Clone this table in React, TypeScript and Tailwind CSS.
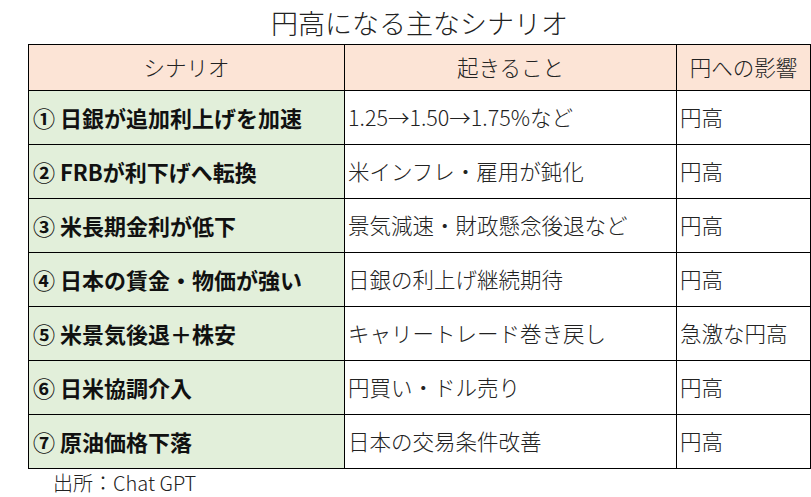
import React from "react";

const rows: [string, string, string][] = [
  ["① 日銀が追加利上げを加速", "1.25→1.50→1.75%など", "円高"],
  ["② FRBが利下げへ転換", "米インフレ・雇用が鈍化", "円高"],
  ["③ 米長期金利が低下", "景気減速・財政懸念後退など", "円高"],
  ["④ 日本の賃金・物価が強い", "日銀の利上げ継続期待", "円高"],
  ["⑤ 米景気後退＋株安", "キャリートレード巻き戻し", "急激な円高"],
  ["⑥ 日米協調介入", "円買い・ドル売り", "円高"],
  ["⑦ 原油価格下落", "日本の交易条件改善", "円高"],
];

export default function App() {
  return (
    <div
      className="w-[811px] h-[497px] bg-white overflow-hidden text-[#1a1a1a]"
      style={{ fontFamily: '"Noto Sans CJK JP", "Noto Sans", sans-serif' }}
    >
      <div className="pl-[28px]">
        <div className="w-[783px] h-[44px] flex items-center justify-center text-[27px] leading-none font-light text-[#222]">
          円高になる主なシナリオ
        </div>
        <div className="w-[783px] grid grid-cols-[316px_332px_134px] border-l border-t border-black">
          <div className="h-[46px] bg-[#fce4d6] border-r border-b border-black flex items-center justify-center text-[21.5px] font-light text-[#222]">
            シナリオ
          </div>
          <div className="h-[46px] bg-[#fce4d6] border-r border-b border-black flex items-center justify-center text-[21.5px] font-light text-[#222]">
            起きること
          </div>
          <div className="h-[46px] bg-[#fce4d6] border-r border-b border-black flex items-center justify-center text-[21.5px] font-light text-[#222]">
            円への影響
          </div>
          {rows.map((r, i) => (
            <React.Fragment key={i}>
              <div className="h-[54px] bg-[#e2efda] border-r border-b border-black flex items-center pl-[4px] text-[22px] font-bold text-[#111] whitespace-nowrap">
                {r[0]}
              </div>
              <div className="h-[54px] bg-white border-r border-b border-black flex items-center pl-[3px] text-[21.5px] font-light text-[#222] whitespace-nowrap">
                {r[1]}
              </div>
              <div className="h-[54px] bg-white border-r border-b border-black flex items-center pl-[3px] text-[21.5px] font-light text-[#222] whitespace-nowrap">
                {r[2]}
              </div>
            </React.Fragment>
          ))}
        </div>
      </div>
      <div className="pl-[53px] h-[28px] flex items-center text-[20px] font-light text-[#222] leading-none">
        出所：Chat GPT
      </div>
    </div>
  );
}
